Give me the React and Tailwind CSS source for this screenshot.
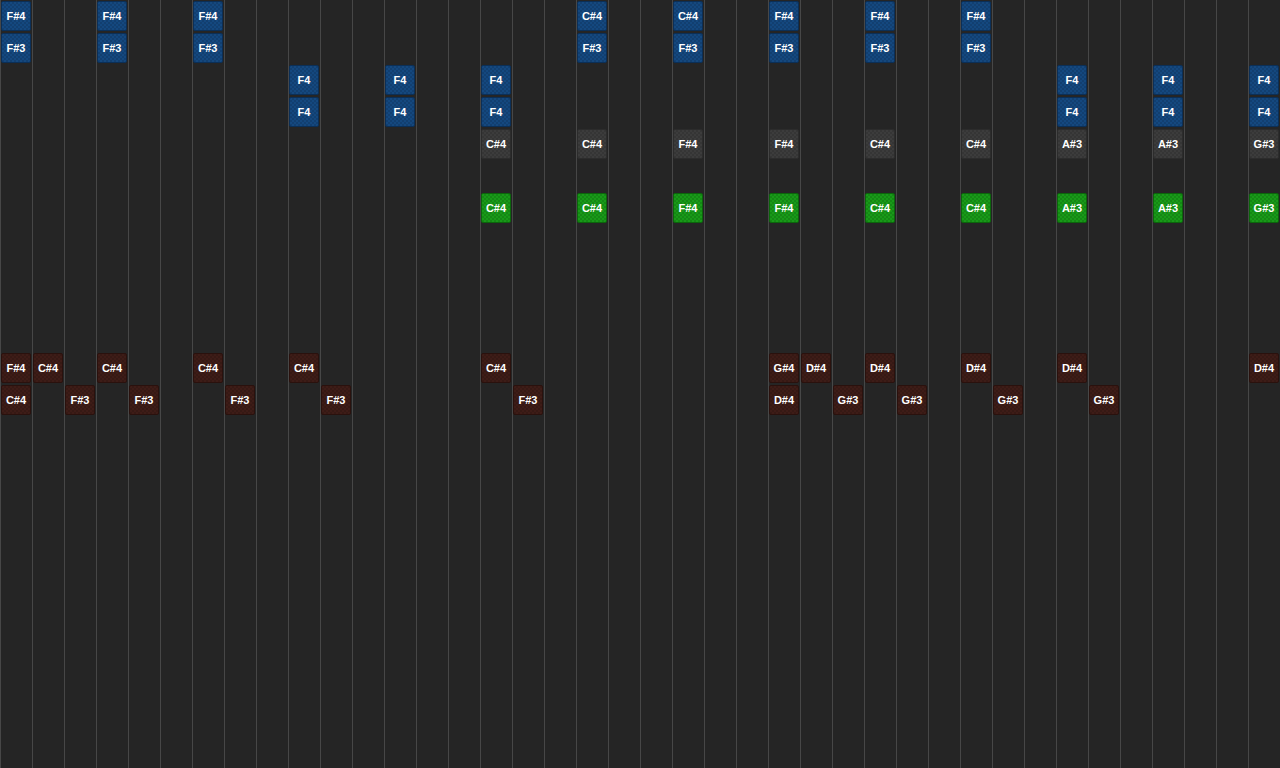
const notes = [
  ...[[0, "F#4"], [3, "F#4"], [6, "F#4"], [18, "C#4"], [21, "C#4"], [24, "F#4"], [27, "F#4"], [30, "F#4"]].map(([c, t]) => ({ c, r: 0, t, k: "blue" })),
  ...[0, 3, 6, 18, 21, 24, 27, 30].map((c) => ({ c, r: 1, t: "F#3", k: "blue" })),
  ...[9, 12, 15, 33, 36, 39].flatMap((c) => [{ c, r: 2, t: "F4", k: "blue" }, { c, r: 3, t: "F4", k: "blue" }]),
  ...[[15, "C#4"], [18, "C#4"], [21, "F#4"], [24, "F#4"], [27, "C#4"], [30, "C#4"], [33, "A#3"], [36, "A#3"], [39, "G#3"]].flatMap(([c, t]) => [
    { c, r: 4, t, k: "gray" },
    { c, r: 6, t, k: "green" },
  ]),
  ...[[0, "F#4"], [1, "C#4"], [3, "C#4"], [6, "C#4"], [9, "C#4"], [15, "C#4"], [24, "G#4"], [25, "D#4"], [27, "D#4"], [30, "D#4"], [33, "D#4"], [39, "D#4"]].map(([c, t]) => ({ c, r: 11, t, k: "red" })),
  ...[[0, "C#4"], [2, "F#3"], [4, "F#3"], [7, "F#3"], [10, "F#3"], [16, "F#3"], [24, "D#4"], [26, "G#3"], [28, "G#3"], [31, "G#3"], [34, "G#3"]].map(([c, t]) => ({ c, r: 12, t, k: "red" })),
];

const styles = {
  blue: "bg-[#14487f] border-[#0b2f57]",
  gray: "bg-[#3c3c3c] border-[#2c2c2c]",
  green: "bg-[#189a18] border-[#0b660b]",
  red: "bg-[#3e1c17] border-[#2a110d]",
};

export default function App() {
  return (
    <div
      className="w-[1280px] h-[768px] overflow-hidden bg-[#252525] bg-[linear-gradient(to_right,#474747_1px,transparent_1px)] bg-[length:32px_32px] grid grid-cols-[repeat(40,32px)] grid-rows-[repeat(24,32px)]"
      style={{ fontFamily: '"Liberation Sans", Arial, sans-serif' }}
    >
      {notes.map((n, i) => (
        <div
          key={i}
          className="p-px"
          style={{ gridColumnStart: n.c + 1, gridRowStart: n.r + 1 }}
        >
          <div
            className={`w-[30px] h-[30px] rounded-[2px] border flex items-center justify-center text-[11px] font-bold text-white bg-[image:repeating-conic-gradient(rgba(0,0,0,0.12)_0_25%,transparent_0_50%)] bg-[length:4px_4px] ${styles[n.k]}`}
          >
            <span className="leading-none">{n.t}</span>
          </div>
        </div>
      ))}
    </div>
  );
}
